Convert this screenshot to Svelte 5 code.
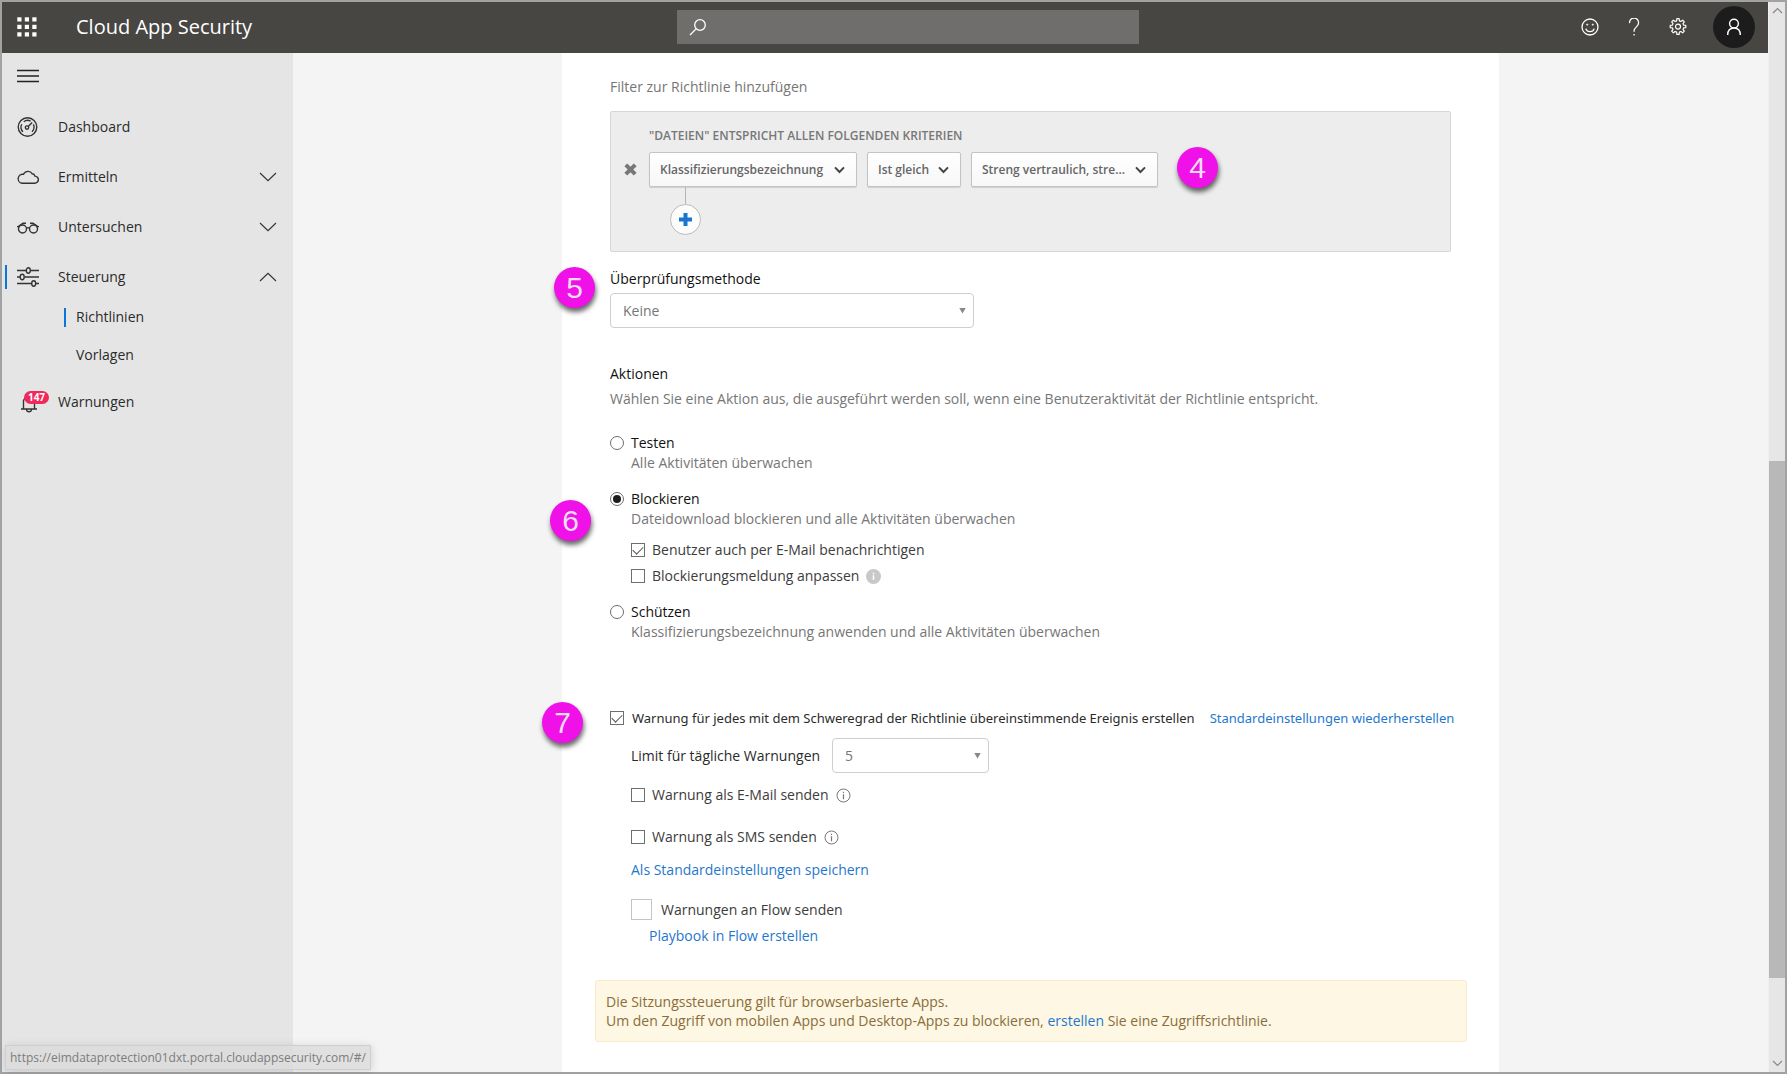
<script>
  let action = $state('block');
  let notifyUser = $state(true);
  let customMessage = $state(false);
  let alertEach = $state(true);
  let byMail = $state(false);
  let bySms = $state(false);
  let byFlow = $state(false);
</script>

{#snippet chevron(up)}
  <svg class="chev" class:up width="18" height="10" viewBox="0 0 18 10" aria-hidden="true">
    <path d="M1 1l8 7.6L17 1" fill="none" stroke="currentColor" stroke-width="1.2" />
  </svg>
{/snippet}

{#snippet infoOutline(label)}
  <button class="icon-btn info" aria-label={label}>
    <svg width="15" height="15" viewBox="0 0 15 15">
      <circle cx="7.5" cy="7.5" r="6.5" fill="none" stroke="#777" />
      <path d="M7.5 6.3v4.9M7.5 3.7v1.4" stroke="#777" stroke-width="1.2" />
    </svg>
  </button>
{/snippet}

{#snippet boldArrow()}
  <svg class="arrow" width="11" height="8" viewBox="0 0 11 8" aria-hidden="true">
    <path d="M1 1.4l4.5 4.6L10 1.4" fill="none" stroke="#444" stroke-width="2" />
  </svg>
{/snippet}

{#snippet smallArrow()}
  <svg class="arrow" width="7" height="6" viewBox="0 0 7 6" aria-hidden="true">
    <path d="M.3 0h6.4L3.500 5.600z" fill="#888" />
  </svg>
{/snippet}

<div class="window">
  <div class="app">
    <header>
      <button class="icon-btn waffle" aria-label="App-Startfeld">
        <svg width="20" height="20" viewBox="0 0 20 20" fill="#fff">
          {#each [0, 7.5, 15] as y}
            {#each [0, 7.5, 15] as x}
              <rect x={x + 0.3} y={y + 0.3} width="4.2" height="4.2" />
            {/each}
          {/each}
        </svg>
      </button>
      <h1>Cloud App Security</h1>
      <label class="search">
        <svg width="18" height="18" viewBox="0 0 18 18" fill="none" stroke="#fff" stroke-width="1.3">
          <circle cx="11" cy="7" r="5.3" />
          <path d="M7.1 10.9L1 17" />
        </svg>
        <input type="search" aria-label="Suchen" />
      </label>
      <div class="tools">
        <button class="icon-btn" aria-label="Feedback">
          <svg width="18" height="18" viewBox="0 0 18 18" fill="none" stroke="#fff" stroke-width="1.3">
            <circle cx="9" cy="9" r="8" />
            <path d="M4.8 10.6a4.4 4.4 0 0 0 8.4 0" />
            <circle cx="6.2" cy="6.6" r=".7" fill="#fff" stroke-width=".6" />
            <circle cx="11.8" cy="6.6" r=".7" fill="#fff" stroke-width=".6" />
          </svg>
        </button>
        <button class="icon-btn" aria-label="Hilfe">
          <svg width="18" height="18" viewBox="0 0 18 18" fill="none" stroke="#fff" stroke-width="1.3">
            <path d="M4.6 5.2a4.5 4.5 0 1 1 8.9 0c0 3.6-4.4 3.8-4.4 7.8v.8M9.1 16v1.6" />
          </svg>
        </button>
        <button class="icon-btn" aria-label="Einstellungen">
          <svg width="18" height="18" viewBox="0 0 18 18" fill="none" stroke="#fff" stroke-width="1.2" stroke-linejoin="round">
            <path d="M7.6 2.9l.3-2.2h2.2l.3 2.2 1.5.6 1.8-1.3 1.6 1.6-1.3 1.8.6 1.5 2.2.3v2.2l-2.2.3-.6 1.5 1.3 1.8-1.6 1.6-1.8-1.3-1.5.6-.3 2.2H7.9l-.3-2.2-1.5-.6-1.8 1.3-1.6-1.6L4 11.4l-.6-1.5-2.2-.3V7.4l2.2-.3L4 5.6 2.7 3.8l1.6-1.6 1.8 1.3z" />
            <circle cx="9" cy="8.6" r="2.5" />
          </svg>
        </button>
        <button class="icon-btn avatar" aria-label="Konto">
          <svg width="16" height="18" viewBox="0 0 16 18" fill="none" stroke="#fff" stroke-width="1.4">
            <circle cx="8" cy="5.6" r="4.4" />
            <path d="M1.7 17c0-4.3 2.3-7 6.3-7s6.3 2.7 6.3 7" />
          </svg>
        </button>
      </div>
    </header>

    <div class="body">
      <nav>
        <button class="icon-btn burger" aria-label="Menü">
          <svg width="22" height="14" viewBox="0 0 22 14" stroke="#222" stroke-width="1.3">
            <path d="M0 1.5h22M0 7h22M0 12.5h22" />
          </svg>
        </button>
        <ul>
          <li>
            <a href="#dashboard">
              <svg width="22" height="22" viewBox="0 0 22 22" fill="none" stroke="#333" stroke-width="1.4">
                <circle cx="10.5" cy="11" r="9.3" />
                <path d="M6 15.8a6.5 6.5 0 0 1-1.3-7.6M6.8 5.7a6.5 6.5 0 0 1 6.8-.6M16.4 8.4a6.5 6.5 0 0 1-1.4 7.4" />
                <circle cx="10" cy="11.6" r="1.7" />
                <path d="M11.2 10.4l4-4" />
              </svg>
              <span>Dashboard</span>
            </a>
          </li>
          <li>
            <a href="#ermitteln">
              <svg width="22" height="22" viewBox="0 0 22 22" fill="none" stroke="#333" stroke-width="1.4">
                <path d="M5 17.3h12.6a3.6 3.6 0 0 0 .3-7.2 3 3 0 0 0-2.6-2.3A5 5 0 0 0 6.5 8.300a4.500 4.500 0 0 0-1.500 9z" />
              </svg>
              <span>Ermitteln</span>
              {@render chevron(false)}
            </a>
          </li>
          <li>
            <a href="#untersuchen">
              <svg width="22" height="22" viewBox="0 0 22 22" fill="none" stroke="#333" stroke-width="1.4">
                <circle cx="5.500" cy="13" r="4" />
                <circle cx="16.500" cy="13" r="4" />
                <path d="M9.500 12.200q1.500-1.200 3 0M0 10.600h2.600M19.400 10.600H22M1.500 10.300L6 7.200h3M20.500 10.300L16 7.200h-3" />
              </svg>
              <span>Untersuchen</span>
              {@render chevron(false)}
            </a>
          </li>
          <li class="current">
            <a href="#steuerung">
              <svg width="22" height="22" viewBox="0 0 22 22" fill="none" stroke="#333" stroke-width="1.400">
                <path d="M0 4.500h9M13.500 4.500H22M0 11h3M7.500 11H22M0 17.500h14.500M19 17.500h3" />
                <ellipse cx="11.300" cy="4.500" rx="2" ry="2.700" />
                <ellipse cx="5.200" cy="11" rx="2" ry="2.700" />
                <ellipse cx="16.700" cy="17.500" rx="2" ry="2.700" />
              </svg>
              <span>Steuerung</span>
              {@render chevron(true)}
            </a>
            <ul class="sub">
              <li class="on"><a href="#richtlinien">Richtlinien</a></li>
              <li><a href="#vorlagen">Vorlagen</a></li>
            </ul>
          </li>
          <li>
            <a href="#warnungen">
              <span class="bell">
                <svg width="22" height="22" viewBox="0 0 22 22" fill="none" stroke="#333" stroke-width="1.400">
                  <path d="M4 18h16M6.500 18V9.500a6 6 0 0 1 11 0V18M9.500 18.500c.3 3 4.700 3 5 0" />
                </svg>
                <b>147</b>
              </span>
              <span>Warnungen</span>
            </a>
          </li>
        </ul>
      </nav>

      <main>
        <div class="panel">
          <section class="inset">
            <p class="muted">Filter zur Richtlinie hinzufügen</p>
            <div class="filter">
              <p class="caption">"DATEIEN" ENTSPRICHT ALLEN FOLGENDEN KRITERIEN</p>
              <div class="criteria">
                <button class="icon-btn remove" aria-label="Filter entfernen">
                  <svg width="13" height="13" viewBox="0 0 13 13" stroke="#777" stroke-width="4">
                    <path d="M1.800 1.800l9.400 9.400M11.200 1.800l-9.400 9.400" />
                  </svg>
                </button>
                <div class="pick wide">
                  <select aria-label="Feld"><option>Klassifizierungsbezeichnung</option></select>
                  {@render boldArrow()}
                </div>
                <div class="pick narrow">
                  <select aria-label="Operator"><option>Ist gleich</option></select>
                  {@render boldArrow()}
                </div>
                <div class="pick mid">
                  <select aria-label="Wert"><option>Streng vertraulich, stre...</option></select>
                  {@render boldArrow()}
                </div>
                <span class="step s4">4</span>
              </div>
              <div class="add">
                <button aria-label="Filter hinzufügen">
                  <svg width="13" height="13" viewBox="0 0 13 13" stroke="#1a75cf" stroke-width="4">
                    <path d="M6.500 0v13M0 6.500h13" />
                  </svg>
                </button>
              </div>
            </div>
          </section>

          <section class="inset method">
            <span class="step s5">5</span>
            <label class="strong" for="method">Überprüfungsmethode</label>
            <div class="drop">
              <select id="method"><option>Keine</option></select>
              {@render smallArrow()}
            </div>
          </section>

          <section class="inset actions">
            <h2 class="strong">Aktionen</h2>
            <p class="muted intro">Wählen Sie eine Aktion aus, die ausgeführt werden soll, wenn eine Benutzeraktivität der Richtlinie entspricht.</p>

            <div class="choice">
              <label class="strong"><input type="radio" name="action" value="test" bind:group={action} />Testen</label>
              <p class="muted">Alle Aktivitäten überwachen</p>
            </div>
            <div class="choice">
              <span class="step s6">6</span>
              <label class="strong"><input type="radio" name="action" value="block" bind:group={action} />Blockieren</label>
              <p class="muted">Dateidownload blockieren und alle Aktivitäten überwachen</p>
              <div class="checks">
                <label><input type="checkbox" bind:checked={notifyUser} />Benutzer auch per E-Mail benachrichtigen</label>
                <div class="row">
                  <label><input type="checkbox" bind:checked={customMessage} />Blockierungsmeldung anpassen</label>
                  <button class="icon-btn info" aria-label="Info zur Blockierungsmeldung">
                    <svg width="15" height="15" viewBox="0 0 15 15">
                      <circle cx="7.500" cy="7.500" r="7.500" fill="#c8c8c8" />
                      <path d="M7.500 6.300v4.700M7.500 3.700v1.500" stroke="#fff" stroke-width="1.500" />
                    </svg>
                  </button>
                </div>
              </div>
            </div>
            <div class="choice">
              <label class="strong"><input type="radio" name="action" value="protect" bind:group={action} />Schützen</label>
              <p class="muted">Klassifizierungsbezeichnung anwenden und alle Aktivitäten überwachen</p>
            </div>
          </section>

          <section class="alerts">
            <span class="step s7">7</span>
            <div class="row each">
              <label class="dark"><input type="checkbox" bind:checked={alertEach} />Warnung für jedes mit dem Schweregrad der Richtlinie übereinstimmende Ereignis erstellen</label>
              <a href="#reset">Standardeinstellungen wiederherstellen</a>
            </div>
            <div class="nested">
              <div class="row limit">
                <label class="dark" for="limit">Limit für tägliche Warnungen</label>
                <div class="drop">
                  <select id="limit"><option>5</option></select>
                  {@render smallArrow()}
                </div>
              </div>
              <div class="row mail">
                <label><input type="checkbox" bind:checked={byMail} />Warnung als E-Mail senden</label>
                {@render infoOutline('Info zu E-Mail')}
              </div>
              <div class="row sms">
                <label><input type="checkbox" bind:checked={bySms} />Warnung als SMS senden</label>
                {@render infoOutline('Info zu SMS')}
              </div>
              <a class="save" href="#save">Als Standardeinstellungen speichern</a>
              <label class="flow"><input type="checkbox" bind:checked={byFlow} />Warnungen an Flow senden</label>
              <a class="playbook" href="#playbook">Playbook in Flow erstellen</a>
            </div>
          </section>

          <div class="notice">
            <p>Die Sitzungssteuerung gilt für browserbasierte Apps.</p>
            <p>Um den Zugriff von mobilen Apps und Desktop-Apps zu blockieren, <a href="#create">erstellen</a> Sie eine Zugriffsrichtlinie.</p>
          </div>
        </div>
      </main>
    </div>
  </div>

  <div class="scroll" aria-hidden="true">
    <svg width="11" height="7" viewBox="0 0 11 7"><path d="M1 6l4.500-4.500L10 6" fill="none" stroke="#888" stroke-width="1.200" /></svg>
    <i></i>
    <svg width="11" height="7" viewBox="0 0 11 7"><path d="M1 1l4.500 4.500L10 1" fill="none" stroke="#888" stroke-width="1.200" /></svg>
  </div>

  <div class="status">https://eimdataprotection01dxt.portal.cloudappsecurity.com/#/</div>
</div>

<style>
  .window, .window :global(*) { box-sizing: border-box; }
  .window {
    position: relative;
    display: flex;
    min-height: 100vh;
    border: 2px solid #a2a2a2;
    background: #f4f4f4;
    font-family: 'Open Sans', 'Noto Sans', sans-serif;
    font-size: 14px;
    line-height: 20px;
    color: #3c3c3c;
  }
  h1, h2, p, ul { margin: 0; padding: 0; }
  ul { list-style: none; }
  a { color: #1f77cd; text-decoration: none; }
  button, select, input { font: inherit; color: inherit; margin: 0; }
  svg { display: block; flex: none; }
  .icon-btn { display: flex; align-items: center; justify-content: center; padding: 0; border: 0; background: none; }

  .app { flex: 1; min-width: 0; display: flex; flex-direction: column; }
  header {
    display: flex;
    align-items: center;
    height: 51px;
    padding: 0 13px 2px 15px;
    background: #474643;
    color: #fff;
  }
  h1 { margin-left: 39px; width: 601px; font-size: 20px; line-height: 28px; font-weight: 400; }
  .search { display: flex; align-items: center; width: 462px; height: 34px; padding: 0 12px; background: #6f6e6c; }
  .search input { flex: 1; min-width: 0; margin-left: 8px; border: 0; outline: 0; background: none; color: #fff; appearance: none; }
  .tools { display: flex; align-items: center; gap: 26px; margin-left: auto; }
  .avatar { width: 42px; height: 42px; border-radius: 50%; background: #1c1c1c; }

  .body { flex: 1; display: flex; }
  nav { width: 291px; flex: none; background: #e5e5e5; color: #2b2b2b; }
  .burger { height: 45px; margin: 0 0 4px 15px; }
  nav ul a { display: flex; align-items: center; height: 50px; padding: 0 16px 0 15px; color: inherit; }
  nav ul span { margin-left: 19px; font-weight: 500; }
  .chev { margin-left: auto; color: #333; }
  .up { transform: rotate(180deg); }
  .current { position: relative; }
  .current::before { content: ''; position: absolute; left: 3px; top: 13px; width: 2px; height: 24px; background: #0b76d8; }
  nav .sub { margin-top: -4px; padding-bottom: 3px; }
  nav .sub a { height: 38px; padding: 0 0 0 10px; }
  .sub li { margin-left: 62px; }
  .sub a::before { content: ''; width: 2px; height: 19px; margin: 0 10px 0 -10px; }
  .sub .on a::before { background: #0b76d8; }
  nav ul .bell { position: relative; margin: 0; }
  .bell b {
    position: absolute; left: 7px; top: 0; width: 25px; height: 13px; border-radius: 7px;
    background: #f0285c; color: #fff; font-size: 10px; line-height: 13px; text-align: center;
  }

  main { flex: 1; min-width: 0; display: flex; justify-content: center; }
  .panel { width: 937px; padding: 24px 28px 24px 33px; background: #fff; }
  .inset { padding: 0 20px 0 15px; }
  .muted { color: #767676; }
  .strong { font-size: 14px; font-weight: 500; color: #111; }
  .dark { color: #2b2b2b; }

  .filter { margin-top: 14px; padding: 14px 0 15px; border: 1px solid #d6d6d6; border-radius: 2px; background: #ededed; }
  .caption { margin-left: 38px; font-size: 12px; font-weight: 600; color: #777; }
  .criteria { display: flex; align-items: center; height: 35px; margin-top: 6px; }
  .remove { width: 38px; }
  .pick, .drop { display: grid; align-items: center; }
  .pick > :global(*), .drop > :global(*) { grid-area: 1 / 1; }
  .arrow { justify-self: end; pointer-events: none; }
  .pick select {
    width: 100%; height: 35px; padding: 1px 10px 0; appearance: none;
    border: 1px solid #c4c4c4; border-radius: 2px; box-shadow: 0 1px 1px #0002;
    background: linear-gradient(#fff, #f7f7f7); font-size: 12px; font-weight: 600; color: #666;
  }
  .pick .arrow { margin-right: 12px; }
  .pick { margin-right: 10px; }
  .wide { width: 208px; }
  .narrow { width: 94px; }
  .mid { width: 187px; margin-right: 19px; }
  .add { display: flex; flex-direction: column; align-items: center; width: 31px; margin: 0 0 1px 59px; }
  .add::before { content: ''; width: 1px; height: 17px; background: #b5b5b5; }
  .add button {
    display: grid; place-items: center; width: 31px; height: 31px; padding: 0;
    border: 1px solid #bcbcbc; border-radius: 50%; background: #fcfcfc;
  }

  .step {
    flex: none; width: 41px; height: 41px; border-radius: 50%; background: #f010e8; color: #eedcf0;
    font: 30px/41px 'Liberation Sans', sans-serif; text-align: center; box-shadow: 1px 4px 5px #0009;
  }
  .s4 { margin-bottom: 4px; }
  .s5, .s6, .s7 { position: absolute; }
  .method, .choice, .alerts { position: relative; }
  .s5 { left: -41px; top: -2px; }
  .s6 { left: -60px; top: 11px; }
  .s7 { left: -53px; top: -6px; }

  .method { margin-top: 17px; }
  .method label { display: block; }
  .method .drop { width: 364px; margin-top: 4px; }
  .drop select {
    width: 100%; height: 35px; padding: 0 12px; appearance: none;
    border: 1px solid #cfcfcf; border-radius: 4px; background: #fff; color: #767676;
  }
  .drop .arrow { margin-right: 8px; }

  .actions { margin-top: 36px; }
  .intro { margin: 5px 0 24px; }
  .choice { margin-bottom: 16px; }
  .choice p, .choice .checks { margin-left: 21px; }
  .checks { display: flex; flex-direction: column; gap: 6px; margin-top: 11px; }
  label:has(input) { display: flex; align-items: center; gap: 7px; white-space: nowrap; }
  .row { display: flex; align-items: center; }
  .info { margin-left: 7px; }
  input[type='radio'], input[type='checkbox'] {
    appearance: none; display: grid; place-items: center; flex: none;
    width: 14px; height: 14px; border: 1px solid #6e6e6e; background: #fff;
  }
  input[type='radio'] { border-radius: 50%; }
  input[type='radio']:checked::before { content: ''; width: 8px; height: 8px; border-radius: 50%; background: #1c1c1c; }
  input[type='checkbox']:checked::before {
    content: ''; width: 9px; height: 5px; margin-bottom: 3px;
    border: solid #555; border-width: 0 0 1px 1px; transform: rotate(-45deg);
  }

  .alerts { margin-top: 66px; padding-left: 15px; }
  .each { font-family: 'Noto Sans', sans-serif; font-size: 13px; }
  .each label { gap: 8px; }
  .each a { margin-left: 15px; white-space: nowrap; }
  .nested { margin-left: 21px; }
  .limit { margin-top: 10px; }
  .limit .drop { width: 157px; margin-left: 12px; }
  .mail { margin-top: 12px; }
  .sms { margin-top: 22px; }
  .save { display: block; margin-top: 13px; }
  .alerts .flow { gap: 9px; margin-top: 19px; }
  .flow input[type='checkbox'] { width: 21px; height: 21px; border-color: #c4c4c4; }
  .playbook { display: block; margin: 6px 0 0 18px; }

  .notice {
    margin: 34px 4px 0 0; padding: 11px 10px; border: 1px solid #f8ebcb; border-radius: 3px;
    background: #fdf7e3; color: #8a6d3b; line-height: 19px;
  }

  .scroll { display: flex; flex-direction: column; align-items: center; width: 17px; padding: 5px 0; border-left: 1px solid #f0f0f0; background: #e6e6e6; }
  .scroll i { width: 100%; flex: 517; background: #b8b8b8; }
  .scroll::before, .scroll::after { content: ''; }
  .scroll::before { flex: 447; }
  .scroll::after { flex: 82; }
  .scroll svg:first-of-type { order: -1; }
  .scroll svg:last-of-type { order: 2; }

  .status {
    position: absolute; left: 3px; bottom: 2px; padding: 2px 4px;
    border: 1px solid #cfcfcf; background: #dcdcdcd9; box-shadow: 1px 1px 8px #0002;
    font-size: 12px; line-height: 19px; color: #7c7c7c;
  }
</style>
